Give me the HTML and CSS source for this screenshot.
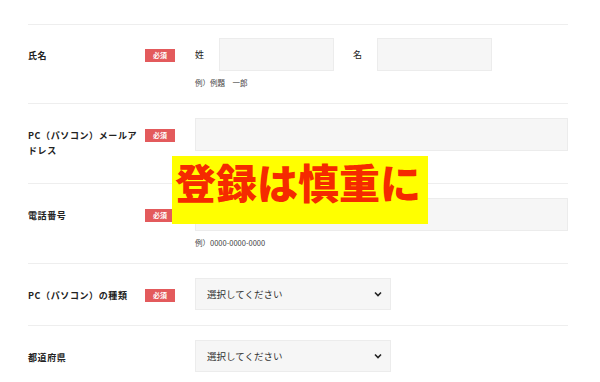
FILE: index.html
```html
<!DOCTYPE html>
<html lang="ja">
<head>
    <meta charset="UTF-8">
    <meta name="viewport" content="width=device-width, initial-scale=1.0">
    <title>会員登録</title>
    <link rel="stylesheet" href="styles.css">
</head>
<body>
    <div class="form">
        <!-- 氏名 -->
        <div class="row row-name">
            <div class="head">
                <span class="label">氏名</span>
                <span class="badge">必須</span>
            </div>
            <div class="body">
                <div class="name-fields">
                    <span class="sub">姓</span>
                    <input type="text" class="input input-short">
                    <span class="sub sub-gap">名</span>
                    <input type="text" class="input input-short">
                </div>
                <p class="hint">例）例題　一郎</p>
            </div>
        </div>

        <!-- メール -->
        <div class="row">
            <div class="head">
                <span class="label">PC（パソコン）メールアドレス</span>
                <span class="badge">必須</span>
            </div>
            <div class="body">
                <input type="text" class="input input-wide">
            </div>
        </div>

        <!-- 電話番号 -->
        <div class="row">
            <div class="head">
                <span class="label">電話番号</span>
                <span class="badge">必須</span>
            </div>
            <div class="body">
                <input type="text" class="input input-wide">
                <p class="hint">例）0000-0000-0000</p>
            </div>
        </div>

        <!-- PCの種類 -->
        <div class="row row-select">
            <div class="head">
                <span class="label">PC（パソコン）の種類</span>
                <span class="badge">必須</span>
            </div>
            <div class="body">
                <div class="select">
                    <span>選択してください</span>
                    <svg class="chevron" width="8" height="6" viewBox="0 0 8 6"><path d="M1 1.5 L4 4.5 L7 1.5" fill="none" stroke="#222" stroke-width="1.6"/></svg>
                </div>
            </div>
        </div>

        <!-- 都道府県 -->
        <div class="row row-select">
            <div class="head">
                <span class="label">都道府県</span>
            </div>
            <div class="body">
                <div class="select">
                    <span>選択してください</span>
                    <svg class="chevron" width="8" height="6" viewBox="0 0 8 6"><path d="M1 1.5 L4 4.5 L7 1.5" fill="none" stroke="#222" stroke-width="1.6"/></svg>
                </div>
            </div>
        </div>
    </div>

    <!-- 注意テロップ -->
    <div class="caution">登録は慎重に</div>
</body>
</html>
```

FILE: styles.css
```css
body {
    margin: 0;
    padding: 0;
    background: #fff;
    font-family: "Noto Sans CJK JP", "Noto Sans", sans-serif;
    color: #222;
}

.form {
    width: 540px;
    margin: 24px 0 0 28px;
}

.row {
    display: flex;
    align-items: flex-start;
    box-sizing: border-box;
    height: 80px;
    padding-top: 14px;
    border-top: 1px solid #eee;
}

.row-name {
    height: 79px;
    padding-top: 13px;
}

.row-select {
    height: 62px;
}

.head {
    display: flex;
    align-items: flex-start;
    width: 167px;
    padding-top: 10px;
    flex-shrink: 0;
}

.label {
    width: 112px;
    margin-right: 5px;
    font-size: 9px;
    font-weight: bold;
    letter-spacing: 0.6px;
    line-height: 15px;
}

.badge {
    width: 30px;
    height: 13px;
    margin-top: 1px;
    line-height: 13px;
    background: #e35a5c;
    color: #fff;
    font-size: 7px;
    font-weight: bold;
    text-align: center;
}

.body {
    flex: 1;
}

.name-fields {
    display: flex;
    align-items: center;
}

.sub {
    font-size: 9px;
    width: 9px;
    margin-right: 15px;
}

.sub-gap {
    margin-left: 19px;
}

.input {
    box-sizing: border-box;
    height: 33px;
    margin: 0;
    background: #f6f6f6;
    border: 1px solid #ececec;
    border-radius: 0;
}

.input-short {
    width: 115px;
}

.input-wide {
    display: block;
    width: 373px;
}

.hint {
    margin: 6px 0 0;
    font-size: 7.5px;
    line-height: 12px;
    color: #444;
}

.select {
    display: flex;
    align-items: center;
    justify-content: space-between;
    box-sizing: border-box;
    width: 196px;
    height: 32px;
    padding: 0 8px 0 11px;
    background: #f6f6f6;
    border: 1px solid #ececec;
    font-size: 9.5px;
    color: #333;
}

.chevron {
    display: block;
}

/* 注意テロップ */
.caution {
    position: absolute;
    left: 172px;
    top: 156px;
    width: 256px;
    height: 68px;
    box-sizing: border-box;
    padding: 0 0 0 3px;
    background: #ffff00;
    color: #f52a00;
    font-size: 41px;
    font-weight: 900;
    line-height: 50px;
    white-space: nowrap;
}
```
